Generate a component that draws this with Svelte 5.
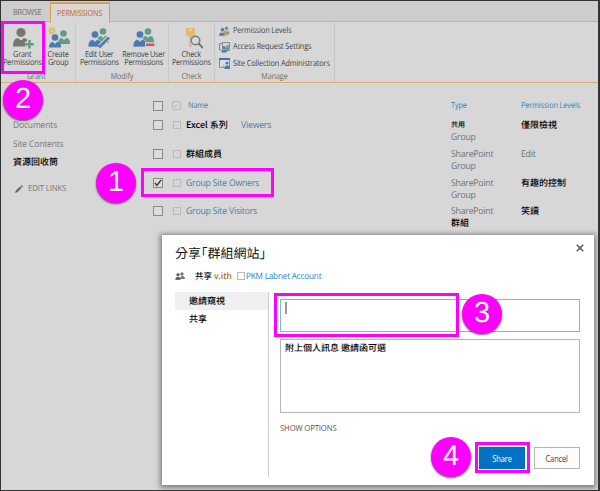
<script>
  const links = [
    { text: 'Documents' },
    { text: 'Site Contents' },
    { text: '資源回收筒', cjk: true }
  ];

  let rows = [
    { name: 'Excel 系列', extra: 'Viewers', cjk: true, type: ['共用', 'Group'], level: '僅限檢視', levelCjk: true },
    { name: '群組成員', cjk: true, type: ['SharePoint', 'Group'], level: 'Edit' },
    { name: 'Group Site Owners', checked: true, type: ['SharePoint', 'Group'], level: '有趣的控制', levelCjk: true },
    { name: 'Group Site Visitors', type: ['SharePoint', '群組'], level: '笑讀', levelCjk: true }
  ];

  function isCjk(text) {
    return text.charCodeAt(0) > 0x3000;
  }
</script>

{#snippet people(size)}
  <svg class="people" width={size} height={size} viewBox="0 0 22 22">
    <circle cx="15" cy="4.500" r="3.300" fill="#649b85" />
    <path d="M9 16c0-5 2-7 4-7l2 2 2-2c3 0 4 2 4 7z" fill="#649b85" />
    <circle cx="7" cy="7.500" r="3.800" fill="#4a7aaf" stroke="#d7d7d7" stroke-width=".7" />
    <path d="M0 20c0-5 2-7.500 5-7.500l2 2 2-2c3 0 5 2 5 7.500z" fill="#4a7aaf" stroke="#d7d7d7" stroke-width=".7" />
  </svg>
{/snippet}

<div class="screen">
  <div class="tabs">
    <span class="tab browse"><span class="label">BROWSE</span></span>
    <span class="tab active"><span class="label">PERMISSIONS</span></span>
  </div>
  <div class="ribbon">
    <div class="group grant">
      <div class="tools">
        <div class="tool">
          <svg width="22" height="22" viewBox="0 0 22 22">
            <circle cx="9" cy="5.500" r="4.600" fill="#777672" />
            <path d="M1 19.500c0-6 2-8 5-8.500l3 2.500 3-2.500c3 .5 5 2 5 8.500z" fill="#777672" />
            <path d="M17.500 12.500v9M13 17h9" stroke="#d7d7d7" stroke-width="5" />
            <path d="M17.500 13v8.500M13.200 17.200h8.600" stroke="#5d9e80" stroke-width="2.500" />
          </svg>
          <span>Grant<br />Permissions</span>
        </div>
        <div class="tool create">
          <svg width="22" height="22" viewBox="0 0 22 22">
            <circle cx="15.500" cy="6.500" r="3.300" fill="#649b85" />
            <path d="M10 17c0-4 2-6 4-6l2 2 2-2c3 .5 4 2 4 6z" fill="#649b85" />
            <circle cx="7" cy="10.500" r="3.300" fill="#4a7aaf" />
            <path d="M1 20.500c0-4 2-5.500 4-5.500l2 2 2-2c3 0 4 1.500 4 5.500z" fill="#4a7aaf" />
            <path d="M4 0v8M0 4h8M1 1l6 6M7 1L1 7" stroke="#dfb95c" stroke-width="1.100" />
            <circle cx="4" cy="4" r="1.600" fill="#d7d7d7" stroke="#dfb95c" />
          </svg>
          <span>Create<br />Group</span>
        </div>
      </div>
      <div class="caption">Grant</div>
    </div>
    <div class="group modify">
      <div class="tools">
        <div class="tool">
          <span class="icon">
            {@render people(22)}
            <svg class="mark" width="22" height="22" viewBox="0 0 22 22">
              <path d="M12 19.500L21 10.500" stroke="#d7d7d7" stroke-width="5" />
              <path d="M11 20.500L21 10.500" stroke="#4a7fbd" stroke-width="2.800" />
            </svg>
          </span>
          <span>Edit User<br />Permissions</span>
        </div>
        <div class="tool remove">
          <span class="icon">
            {@render people(22)}
            <svg class="mark" width="22" height="22" viewBox="0 0 22 22">
              <path d="M12 17.500h10" stroke="#d7d7d7" stroke-width="4.500" />
              <path d="M13 17.800h8.500" stroke="#cf5b45" stroke-width="2.500" />
            </svg>
          </span>
          <span>Remove User<br />Permissions</span>
        </div>
      </div>
      <div class="caption">Modify</div>
    </div>
    <div class="group check">
      <div class="tools">
        <div class="tool">
          <svg width="22" height="22" viewBox="0 0 22 22">
            <path d="M5 1h9v8h-3v11H8V9H5z" fill="#dfbd6c" />
            <path d="M8 3h3" stroke="#d7d7d7" stroke-width="1.500" />
            <circle cx="14.500" cy="14" r="5.500" fill="#d7d7d7" />
            <circle cx="14.500" cy="13.500" r="4.300" fill="#d7d7d7" stroke="#777" stroke-width="1.400" />
            <path d="M17.500 16.500l4.500 4.500" stroke="#777" stroke-width="2" />
          </svg>
          <span>Check<br />Permissions</span>
        </div>
      </div>
      <div class="caption">Check</div>
    </div>
    <div class="group manage">
      <div class="menu">
        <div class="item">
          <span class="icon">
            {@render people(11)}
            <svg class="mark" width="11" height="11" viewBox="0 0 11 11">
              <circle cx="8" cy="7" r="1.800" fill="none" stroke="#daa66a" stroke-width="1.300" />
              <path d="M7 8l-3 2.500" stroke="#daa66a" stroke-width="1.500" />
            </svg>
          </span>
          <span class="label">Permission Levels</span>
        </div>
        <div class="item">
          <svg width="11" height="11" viewBox="0 0 11 11">
            <path d="M4 8H.5V1.500H3M3.500.5h7v6h-7z" fill="none" stroke="#888" />
            <circle cx="8.500" cy="4.500" r="1.500" fill="#649b85" />
            <path d="M6 9c0-3 5-3 5 0z" fill="#649b85" />
            <circle cx="5" cy="5.500" r="1.600" fill="#4a7aaf" />
            <path d="M2.500 10.500c0-4 5.500-4 5.500 0z" fill="#4a7aaf" />
          </svg>
          <span class="label">Access Request Settings</span>
        </div>
        <div class="item">
          <svg width="11" height="11" viewBox="0 0 11 11">
            <path d="M.5.5h10v9H.5z" fill="#dedede" stroke="#888" />
            <path d="M0 1h11" stroke="#4a6fab" stroke-width="2" />
            <circle cx="8" cy="5" r="1.600" fill="#4a7aaf" />
            <path d="M5.500 11c0-5 5.500-5 5.500 0z" fill="#4a7aaf" />
            <path d="M2 9.500l3-3 1 1-3 3z" fill="#daa66a" />
          </svg>
          <span class="label">Site Collection Administrators</span>
        </div>
      </div>
      <div class="caption">Manage</div>
    </div>
  </div>

  <div class="body">
    <nav>
      {#each links as link}
        <span class={link.cjk ? 'cjk' : 'label'}>{link.text}</span>
      {/each}
      <span class="edit">
        <svg width="8" height="8" viewBox="0 0 8 8">
          <path d="M0 8l.7-2.300L5 1.500l1.600 1.600-4.300 4.200zM5.600.9L6.500 0 8 1.500l-.9 1z" fill="#666" />
        </svg>
        <span class="label">EDIT LINKS</span>
      </span>
    </nav>
    <div class="table">
      <div class="row header">
        <span class="box"></span>
        <span class="thumb"><svg width="7" height="7" viewBox="0 0 7 7"><path d="M1 5.500L5.500 1.500" stroke="#bbb" /></svg></span>
        <span class="name"><span class="label">Name</span></span>
        <span class="type"><span class="label">Type</span></span>
        <span class="level"><span class="label">Permission Levels</span></span>
      </div>
      {#each rows as row}
        <div class="row">
          <span class="box">
            {#if row.checked}
              <svg width="8" height="8" viewBox="0 0 8 8"><path d="M1 4l2 2.500L7 1" fill="none" stroke="#333" stroke-width="1.300" /></svg>
            {/if}
          </span>
          <span class="thumb small"></span>
          <span class="name">
            <span class={row.cjk ? 'cjk' : 'label'}>{row.name}</span>
            {#if row.extra}
              <span class="label extra">{row.extra}</span>
            {/if}
          </span>
          <span class="type">
            {#each row.type as line}
              <span class={isCjk(line) ? 'cjk' : 'label'} class:tiny={line === '共用'}>{line}</span>
            {/each}
          </span>
          <span class="level">
            <span class={row.levelCjk ? 'cjk' : 'label'}>{row.level}</span>
          </span>
        </div>
      {/each}
    </div>
  </div>

  <div class="dialog">
    <div class="title">
      <h1>分享「群組網站」</h1>
      <svg width="8" height="8" viewBox="0 0 8 8"><path d="M.8.8l6.400 6.400M7.200.8L.8 7.200" stroke="#555" stroke-width="1.500" /></svg>
    </div>
    <div class="shared">
      <svg width="10" height="8" viewBox="0 0 10 8">
        <circle cx="7" cy="2" r="1.700" fill="#777" />
        <path d="M5 7c0-4 5-4 5 0z" fill="#777" />
        <circle cx="3" cy="2.800" r="1.800" fill="#555" stroke="#fff" stroke-width=".4" />
        <path d="M0 8c0-4.500 6-4.500 6 0z" fill="#555" stroke="#fff" stroke-width=".4" />
      </svg>
      <span class="cjk with">共享 <em>v.ith</em></span>
      <span class="thumb small"></span>
      <span class="label account">PKM Labnet Account</span>
    </div>
    <div class="panes">
      <div class="side">
        <span class="cjk selected">邀請窺視</span>
        <span class="cjk">共享</span>
      </div>
      <div class="form">
        <div class="invite"><span class="caret"></span></div>
        <div class="message cjk">附上個人訊息 邀請函可選</div>
        <div class="options"><span class="label">SHOW OPTIONS</span></div>
        <div class="buttons">
          <button class="share"><span class="label">Share</span></button>
          <button><span class="label">Cancel</span></button>
        </div>
      </div>
    </div>
  </div>

  <div class="mark-box grant-box"></div>
  <div class="mark-box owner-box"></div>
  <div class="mark-box invite-box"></div>
  <div class="mark-box share-box"></div>
  <div class="step one">1</div>
  <div class="step two">2</div>
  <div class="step three">3</div>
  <div class="step four">4</div>
</div>

<style>
  :global(body) {
    margin: 0;
  }

  .screen {
    position: relative;
    box-sizing: border-box;
    width: 600px;
    height: 491px;
    overflow: hidden;
    border: 1px solid #343236;
    border-right-width: 2px;
    background: #d7d7d7;
    color: #555;
    font-family: "Open Sans", "Noto Sans CJK TC", sans-serif;
    font-size: 9.3px;
    letter-spacing: -0.2px;
    line-height: 12px;
    text-rendering: geometricPrecision;
    white-space: nowrap;
  }

  svg {
    display: block;
    flex: none;
  }

  /* narrow the latin text a little */
  .label {
    display: inline-block;
    transform: scaleX(0.93);
    transform-origin: left;
  }

  .cjk {
    color: #000;
    font-family: "Noto Sans CJK TC", sans-serif;
    font-size: 9px;
    font-weight: 500;
    letter-spacing: 0;
  }

  .tabs {
    display: flex;
    height: 20px;
    background: #cdcdcd;
    border-bottom: 1px solid #d8b06b;
    font-size: 8.400px;
  }

  .tabs .label {
    transform: scaleX(0.88);
  }

  .tab {
    box-sizing: border-box;
    line-height: 24px;
  }

  .browse {
    width: 49px;
    padding-left: 12px;
    color: #707070;
    letter-spacing: -0.3px;
  }

  .active {
    width: 60px;
    height: 21px;
    margin-top: 1px;
    padding-left: 6px;
    border: 1px solid #d8a04c;
    border-top-width: 2px;
    border-bottom: 0;
    background: #d7d7d7;
    color: #c06a35;
    line-height: 19px;
    letter-spacing: -0.2px;
  }

  .ribbon {
    display: flex;
    height: 60px;
    border-bottom: 1px solid #d8b06b;
  }

  .group {
    display: flex;
    flex-direction: column;
    justify-content: space-between;
    box-sizing: border-box;
    height: 59px;
    margin-top: 1px;
    border-right: 1px solid #c7c7c7;
  }

  .grant { width: 75px; }
  .modify { width: 93px; }
  .check { width: 46px; }
  .manage { width: 120px; }

  .tools {
    display: flex;
    padding-top: 4px;
  }

  .tool {
    display: flex;
    flex-direction: column;
    align-items: center;
    width: 43px;
    color: #444;
    font-size: 8.400px;
    letter-spacing: -0.25px;
    line-height: 8px;
    text-align: center;
  }

  .tool > span:last-child {
    margin-top: 2px;
    transform: scaleX(0.87);
  }

  .create { width: 29px; }
  .modify .tool { width: 46px; }
  .modify .remove { width: 43px; }
  .check .tool { width: 45px; }

  .icon {
    position: relative;
  }

  .mark {
    position: absolute;
    top: 0;
    left: 0;
  }

  .caption {
    height: 11px;
    color: #707070;
    font-size: 8.400px;
    letter-spacing: -0.1px;
    line-height: 12px;
    text-align: center;
    transform: scaleX(0.86);
  }

  .grant .caption {
    padding-right: 4px;
  }

  .menu {
    display: flex;
    flex-direction: column;
    gap: 4.400px;
    padding: 2px 0 0 4px;
    color: #444;
    font-size: 8.500px;
    letter-spacing: -0.15px;
  }

  .item {
    display: flex;
    align-items: center;
    gap: 3px;
    height: 12px;
  }

  .item .label {
    transform: scaleX(0.86);
  }

  .body {
    display: flex;
    padding-top: 17px;
  }

  nav {
    display: flex;
    flex-direction: column;
    width: 140px;
    padding: 15px 0 0 12px;
    box-sizing: border-box;
    color: #777;
    font-size: 9.100px;
    line-height: 19px;
    letter-spacing: -0.15px;
  }

  nav .cjk {
    line-height: 17px;
  }

  .edit {
    display: flex;
    align-items: center;
    gap: 5px;
    height: 19px;
    margin: 9px 0 0 2px;
    font-size: 8.400px;
  }

  .table {
    flex: 1;
  }

  .row {
    display: grid;
    grid-template-columns: 31px 14px 265px 70px 1fr;
    height: 28.800px;
  }

  .row .box {
    display: flex;
    box-sizing: border-box;
    width: 10px;
    height: 10px;
    margin: 1px 0 0 12px;
    border: 1px solid #8a8a8a;
    background: #dcdcdc;
  }

  .thumb {
    box-sizing: border-box;
    width: 9px;
    height: 9px;
    margin-top: 1px;
    border: 1px solid #b9b9b9;
    border-radius: 2px;
  }

  .thumb.small {
    width: 8px;
    height: 8px;
    margin: 2px 0 0 1px;
    border-radius: 0;
  }

  .header {
    height: 19px;
    font-size: 8.400px;
    letter-spacing: -0.1px;
  }

  .header .label {
    transform: scaleX(0.87);
  }

  .header .name {
    padding-left: 2px;
  }

  .name {
    display: flex;
    color: #3c80b4;
  }

  .extra {
    margin-left: 13px;
  }

  .type {
    display: flex;
    flex-direction: column;
  }

  .type,
  .level {
    color: #707070;
  }

  .tiny {
    font-size: 7px;
  }

  .header .type,
  .header .level {
    color: #3c80b4;
  }

  .dialog {
    position: absolute;
    top: 234px;
    left: 161px;
    box-sizing: border-box;
    width: 432px;
    height: 250px;
    padding: 10px 14px 8px 13px;
    background: #fff;
    box-shadow: 0 1px 5px 2px rgba(0, 0, 0, 0.4);
  }

  .title {
    display: flex;
    justify-content: space-between;
    height: 22px;
  }

  .title svg {
    margin: -1px -4px 0 0;
  }

  h1 {
    margin: 0;
    color: #111;
    font-family: "Noto Sans CJK TC", sans-serif;
    font-feature-settings: "halt";
    font-size: 13px;
    font-weight: 400;
    letter-spacing: 0;
    line-height: 15px;
  }

  .shared {
    display: flex;
    align-items: center;
    height: 18px;
    color: #2a80c4;
  }

  .with {
    width: 41px;
    margin-left: 10px;
    font-size: 8.500px;
  }

  .with em {
    color: #b56a12;
    font-style: normal;
  }

  .account {
    margin-left: 1px;
    font-size: 8.800px;
    letter-spacing: -0.2px;
  }

  .shared .thumb.small {
    margin-top: 0;
  }

  .panes {
    display: flex;
    height: 185px;
    margin-top: 7px;
  }

  .side {
    display: flex;
    flex-direction: column;
    width: 93px;
    border-right: 1px solid #ccc;
    line-height: 18px;
  }

  .side span {
    padding-left: 14px;
  }

  .side .selected {
    background: #f0f0f0;
  }

  .form {
    flex: 1;
    padding: 7px 0 0 11px;
  }

  .invite,
  .message {
    box-sizing: border-box;
    border: 1px solid #7db5df;
  }

  .invite {
    height: 33px;
    padding: 2px 4px;
  }

  .caret {
    display: block;
    width: 1.500px;
    height: 12px;
    background: #999;
  }

  .message {
    height: 74px;
    margin-top: 7px;
    padding: 2px 4px;
    border-color: #b4b4b4;
  }

  .options {
    margin-top: 10px;
    font-size: 8.300px;
    letter-spacing: -0.15px;
  }

  .buttons {
    display: flex;
    justify-content: flex-end;
    gap: 9px;
    margin-top: 12px;
  }

  button {
    width: 46px;
    height: 22px;
    padding: 0;
    border: 1px solid #b4b4b4;
    background: #fdfdfd;
    color: #444;
    font-family: inherit;
    font-size: 8.500px;
    letter-spacing: -0.15px;
  }

  button .label {
    transform: scaleX(0.88);
    transform-origin: center;
  }

  .share {
    border-color: #0072c6;
    background: #0072c6;
    color: #fff;
  }

  .mark-box {
    position: absolute;
    box-sizing: border-box;
    border: 3px solid #f0f;
  }

  .grant-box { top: 20px; left: 0; width: 44px; height: 53px; }
  .owner-box { top: 167px; left: 140px; width: 133px; height: 29px; }
  .invite-box { top: 292px; left: 273px; width: 185px; height: 44px; }
  .share-box { top: 441px; left: 474px; width: 55px; height: 31px; }

  .step {
    position: absolute;
    width: 40px;
    height: 40px;
    border-radius: 50%;
    background: #f0f;
    box-shadow: 0 1px 2px rgba(0, 0, 0, 0.6);
    color: #fff;
    font-family: "Liberation Sans", sans-serif;
    font-size: 29px;
    letter-spacing: 0;
    line-height: 39px;
    text-align: center;
  }

  .one { top: 162px; left: 95px; }
  .two { top: 79px; left: 2px; }
  .three { top: 293px; left: 461px; }
  .four { top: 436px; left: 430px; }
</style>
